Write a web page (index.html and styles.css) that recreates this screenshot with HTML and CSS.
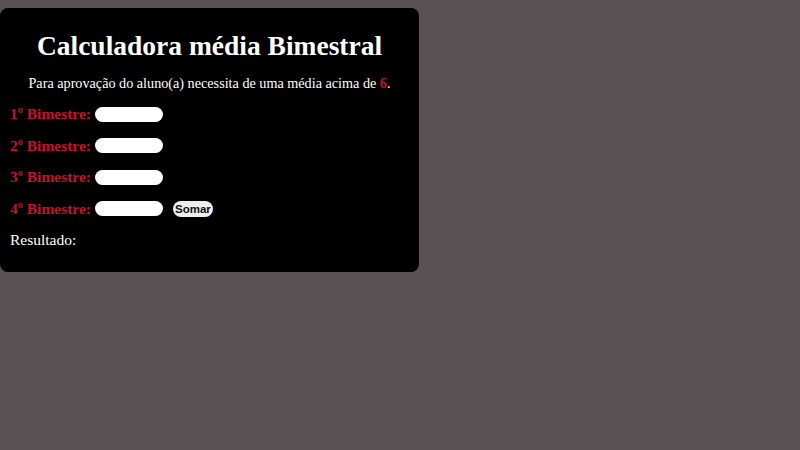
FILE: index.html
```html
<!DOCTYPE html>
<html lang="pt-BR">
<head>
<meta charset="utf-8">
<title>Calculadora média Bimestral</title>
<link rel="stylesheet" href="styles.css">
</head>
<body>
<main class="card">
  <h1 class="title">Calculadora média Bimestral</h1>
  <p class="intro">Para aprovação do aluno(a) necessita de uma média acima de <span class="accent">6</span>.</p>
  <div class="row"><label class="label">1º Bimestre:</label><input class="field" type="text"></div>
  <div class="row"><label class="label">2º Bimestre:</label><input class="field" type="text"></div>
  <div class="row"><label class="label">3º Bimestre:</label><input class="field" type="text"></div>
  <div class="row"><label class="label">4º Bimestre:</label><input class="field" type="text"><button class="btn" type="button">Somar</button></div>
  <p class="result">Resultado:</p>
</main>
</body>
</html>
```
FILE: styles.css
```css
html, body {
  margin: 0;
  padding: 0;
}
body {
  background: #595153;
  padding-top: 8px;
  height: 442px;
  font-family: "Liberation Serif", "DejaVu Serif", serif;
  color: #fff;
}
.card {
  width: 419px;
  height: 264px;
  box-sizing: border-box;
  background: #000;
  border-radius: 8px;
  padding: 23px 10px 0 10px;
}
.title {
  margin: 0;
  text-align: center;
  font-size: 27.5px;
  font-weight: bold;
  line-height: 30px;
}
.intro {
  margin: 13px 0 0 0;
  text-align: center;
  font-size: 14.2px;
  line-height: 18px;
  white-space: nowrap;
}
.accent {
  color: #c8102e;
  font-weight: bold;
}
.row {
  display: flex;
  align-items: center;
  height: 18px;
  margin-top: 13.5px;
}
.intro + .row {
  margin-top: 13px;
}
.label {
  color: #c8102e;
  font-weight: bold;
  font-size: 15.5px;
  margin-right: 4px;
}
.field {
  width: 68px;
  height: 15px;
  box-sizing: border-box;
  border: none;
  border-radius: 8px;
  background: #fff;
  padding: 0 6px;
}
.btn {
  margin-left: 10px;
  font-family: "Liberation Sans", Arial, sans-serif;
  font-weight: bold;
  font-size: 11.5px;
  color: #111;
  background: #eeeeee;
  border: none;
  border-radius: 8px;
  height: 16px;
  padding: 0 2px;
  line-height: 16px;
}
.result {
  margin: 13.5px 0 0 0;
  font-size: 15.5px;
  line-height: 18px;
}
```
